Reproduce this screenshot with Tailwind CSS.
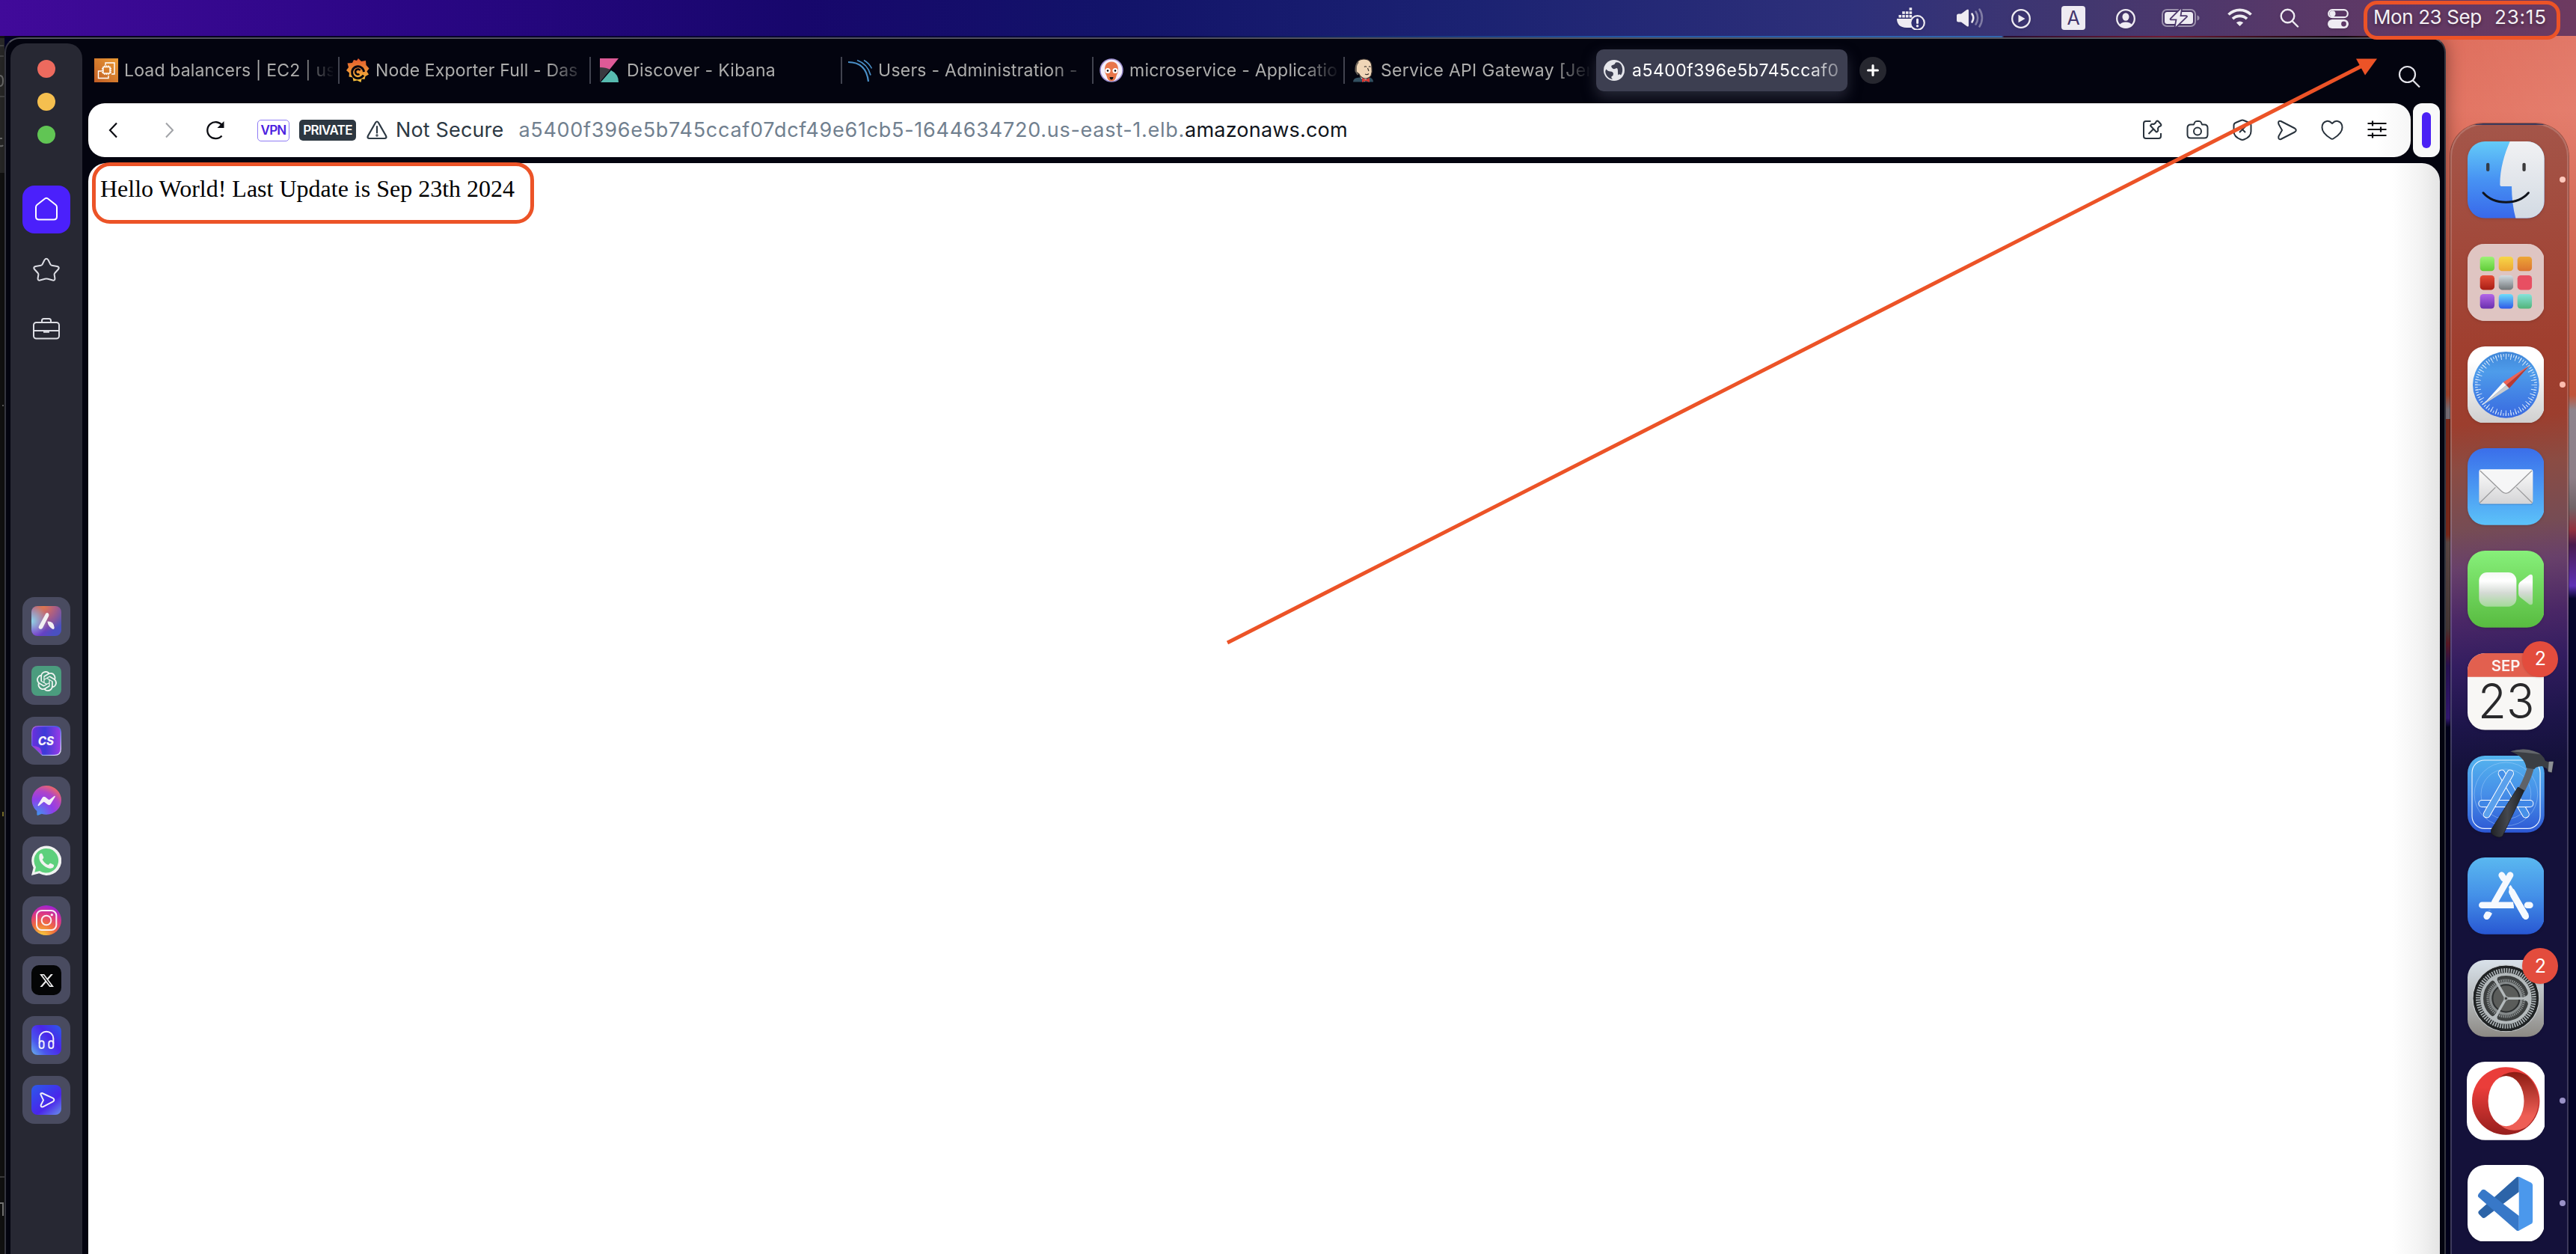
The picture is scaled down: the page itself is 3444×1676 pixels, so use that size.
<!DOCTYPE html>
<html lang="en">
<head>
<meta charset="utf-8">
<title>Desktop</title>
<script src="https://cdn.jsdelivr.net/npm/@tailwindcss/browser@4"></script>
</head>
<body class="relative flex h-[1676px] w-[3444px] flex-col overflow-hidden bg-[#020228] font-['Inter',sans-serif]">

<!-- menu bar -->
<header class="relative z-20 flex h-12 shrink-0 items-center bg-[linear-gradient(90deg,#410a9a_0%,#2a0684_16%,#17076c_31%,#121369_43%,#1b2272_57%,#2e307a_72%,#42376f_81%,#583868_89%,#6d3a60_100%)] pl-[2536px] text-[#eeebf2]">
  <svg class="h-8 w-[38px] shrink-0 drop-shadow" viewBox="0 0 38 32" fill="currentColor"><path d="M0 17h21a10 10 0 0 0-1 12H13C4 29 0 24 0 17z"/><path d="M2.500 12h3.600v3.600H2.500zM7.200 12h3.600v3.600H7.200zM11.900 12h3.600v3.600h-3.600zM16.600 12h3.600v3.600h-3.600zM7.200 7.200h3.600v3.600H7.200zM11.900 7.200h3.600v3.600h-3.600zM16.600 7.200h3.600v3.600h-3.600zM16.600 2.200h3.600v3.600h-3.600z"/><circle cx="27.500" cy="22.500" r="9.300" fill="none" stroke="currentColor" stroke-width="2.200"/><rect x="26" y="16.500" width="3" height="7.500" rx="1.500"/><circle cx="27.500" cy="26.800" r="1.700"/></svg>
  <svg class="ml-[42px] h-8 w-[36px] shrink-0 drop-shadow" viewBox="0 0 36 32"><path d="M0 13q0-2.500 2.500-2.500H6L13.500 5q2.500-1.500 2.500 1v20q0 2.500-2.500 1L6 21.500H2.500Q0 21.500 0 19z" fill="currentColor"/><g fill="none" stroke="currentColor" stroke-width="2.600" stroke-linecap="round"><path d="M20.500 10.500a10 10 0 0 1 0 11"/><path d="M25.500 7.500a15 15 0 0 1 0 17" opacity=".4"/><path d="M30.500 4.500a21 21 0 0 1 0 23" opacity=".4"/></g></svg>
  <svg class="ml-[37px] mt-[2px] size-[26px] shrink-0 drop-shadow" viewBox="0 0 26 26"><circle cx="13" cy="13" r="11.800" fill="none" stroke="currentColor" stroke-width="2.300"/><path d="M9.500 7.700v10.600l9-5.300z" fill="currentColor"/></svg>
  <div class="ml-[41px] flex size-8 shrink-0 items-center justify-center rounded-[4px] bg-[#eeebf2] text-[25px] leading-none text-[#43356c]">A</div>
  <svg class="ml-[41px] mt-[2px] size-[26px] shrink-0 drop-shadow" viewBox="0 0 26 26"><circle cx="13" cy="13" r="11.800" fill="none" stroke="currentColor" stroke-width="2.300"/><ellipse cx="13" cy="10.500" rx="4.500" ry="5.200" fill="currentColor"/><path d="M4.500 21.500Q7 17.500 13 17.500t8.500 4Q18 25 13 25t-8.500-3.500z" fill="currentColor"/></svg>
  <svg class="ml-[35px] h-[26px] w-[51px] shrink-0 drop-shadow" viewBox="0 0 51 26"><rect x="1" y="2" width="44" height="22" rx="6" fill="none" stroke="currentColor" stroke-width="2" opacity=".5"/><path d="M47.500 9.500q3 1 3 3.500t-3 3.500z" fill="currentColor" opacity=".5"/><rect x="4" y="5" width="38" height="16" rx="3.500" fill="currentColor"/><path d="M26 1L12.500 14.500h8L18.500 25 33 11h-8.500z" fill="currentColor" stroke="#4d386c" stroke-width="3.600" stroke-linejoin="round" paint-order="stroke"/></svg>
  <svg class="ml-[37px] h-[26px] w-[33px] shrink-0 drop-shadow" viewBox="0 0 33 26" fill="none" stroke="currentColor" stroke-width="3.800"><path d="M1.500 8.500a21.500 21.500 0 0 1 30 0"/><path d="M7 14.200a13.700 13.700 0 0 1 19 0"/><path d="M11.800 19.300Q16.500 15.500 21.200 19.300L16.500 24z" fill="currentColor" stroke="none"/></svg>
  <svg class="ml-[37px] size-[26px] shrink-0 drop-shadow" viewBox="0 0 26 26" fill="none" stroke="currentColor" stroke-width="2.400" stroke-linecap="round"><circle cx="10.500" cy="10.500" r="8.800"/><path d="M17 17.500l7 7"/></svg>
  <svg class="ml-[38px] mt-[2px] h-[26px] w-7 shrink-0 drop-shadow" viewBox="0 0 28 26"><rect x="1.200" y="1.200" width="25.600" height="10" rx="5" fill="none" stroke="currentColor" stroke-width="2.200"/><circle cx="6.500" cy="6.200" r="4" fill="currentColor"/><rect y="14" width="28" height="12" rx="6" fill="currentColor"/><circle cx="21.500" cy="20" r="3.400" fill="#5e3968"/></svg>
  <div class="relative ml-[20px] flex h-12 w-[263px] shrink-0 items-start pl-[13px] pt-[8px] text-[26px] leading-[30px] text-[#f4f0f4]">
    <span class="w-[162px] shrink-0 whitespace-nowrap tracking-[-0.4px] [text-shadow:0_2px_4px_#0006]">Mon 23 Sep</span><span class="tracking-[0.8px] [text-shadow:0_2px_4px_#0006]">23:15</span>
    <div class="absolute left-0 top-[1px] h-[52px] w-[263px] rounded-[18px] border-[5px] border-[#ec5327]"></div>
  </div>
</header>

<!-- wallpaper around the window -->
<div class="absolute right-0 top-12 h-[1628px] w-[200px] bg-[linear-gradient(75deg,#0000_60%,#ffffff18_100%),linear-gradient(180deg,#de6a58_0%,#e27260_100px,#d46450_220px,#c4533b_400px,#bd4c30_480px,#8a7f88_500px,#8a7a84_590px,#6d5f63_630px,#8f2c3b_660px,#45154a_680px,#5b2cb4_735px,#020228_752px)]"></div>
<div class="absolute left-[3270px] top-[560px] h-[1116px] w-[8px] bg-[linear-gradient(180deg,#8f2f1f_0px,#8f2f1f_155px,#6d5350_165px,#50403f_280px,#6a1d2b_300px,#2e1460_330px,#3a1b85_400px,#020220_412px)]"></div>
<div class="absolute left-0 top-12 h-[2px] w-full bg-[linear-gradient(90deg,#08031f_0%,#0a0a50_45%,#2d6fd0_64%,#3f80d8_77.700%,#32103a_77.800%,#8a2040_84%,#100510_91%,#a03030_94%,#0000_95%)]"></div>

<main class="relative flex h-[1628px]">
  <!-- edge of a window behind -->
  <svg class="h-[1628px] w-[6px] shrink-0" viewBox="0 0 6 1628"><rect width="6" height="1628" fill="#131313"/><rect width="6" height="180" y="3" fill="#2b2b2b"/><path d="M0 13h5M0 27h5M0 81h6" stroke="#555" stroke-width="1.500"/><path d="M0 53q4 0 4 7t-4 7M0 137h3M0 147q3 1 4-1" stroke="#777" stroke-width="2" fill="none"/><path d="M3 494h2" stroke="#888" stroke-width="1.500"/><path d="M4 1037v6" stroke="#8c8032" stroke-width="2"/><path d="M0 1525h6" stroke="#444" stroke-width="2"/><path d="M0 1560h4v17" stroke="#888" stroke-width="2" fill="none"/></svg>

  <!-- browser window -->
  <div class="mt-[2px] flex w-[3264px] shrink-0 rounded-t-[20px] border-2 border-b-0 border-[#50515c] border-x-[#34353f] bg-[#03040f] pl-[6px] shadow-[0_0_24px_#0006]">
    <aside class="mt-[6px] flex w-24 shrink-0 flex-col items-center rounded-t-[20px] bg-[#272833] pt-[22px]">
      <div class="flex flex-col gap-5">
        <i class="size-6 rounded-full bg-[#ed6a5e]"></i><i class="size-6 rounded-full bg-[#f5bf4f]"></i><i class="size-6 rounded-full bg-[#61c554]"></i>
      </div>
      <div class="mt-[56px] flex flex-col gap-4 text-[#dcdde4]">
        <div class="flex size-16 items-center justify-center rounded-2xl bg-[#4b20fb] text-white"><svg class="size-10" viewBox="0 0 40 40" fill="none" stroke="currentColor" stroke-width="2" stroke-linejoin="round"><path d="M6 17q0-2 1.500-3.200L18 5.500q2-1.500 4 0l10.500 8.300Q34 15 34 17v12.500q0 4-4 4H10q-4 0-4-4z"/></svg></div>
        <div class="flex size-16 items-center justify-center"><svg class="size-10" viewBox="0 0 40 40" fill="none" stroke="currentColor" stroke-width="2" stroke-linejoin="round"><path d="M17.500 7.500q2.500-3.500 5 0l3 6q.6 1 1.800 1.200l7 1.300q4 1 1.500 4l-4.500 5q-.8 1-.7 2l.8 5q.2 3.200-3 2.500l-6.500-1.800q-1.900-.5-3.800 0l-6.500 1.800q-3.200.7-3-2.500l.8-5q.1-1-.7-2l-4.500-5q-2.500-3 1.500-4l7-1.300q1.200-.2 1.800-1.200z"/></svg></div>
        <div class="flex size-16 items-center justify-center"><svg class="size-10" viewBox="0 0 40 40" fill="none" stroke="currentColor" stroke-width="2"><rect x="3" y="11" width="34" height="21.500" rx="3.500"/><path d="M14 11V8.500Q14 6 16.500 6h7Q26 6 26 8.500V11M3 22h34"/><path d="M16 23.500h8" stroke-width="2.500"/></svg></div>
      </div>

      <div class="mt-[326px] flex flex-col gap-4">
        <div class="flex size-16 items-center justify-center rounded-[16px] bg-[#494b60]"><div class="flex size-10 items-center justify-center rounded-lg bg-[radial-gradient(circle_at_0%_50%,#8fd5e8_0%,#8fd5e800_50%),radial-gradient(circle_at_40%_0%,#e07a4c_0%,#e07a4c00_75%),linear-gradient(120deg,#7a35c8_40%,#4a50c0_80%)]"><svg class="size-10" viewBox="0 0 120 120" fill="#f2f0f2"><path d="M58 29q8-6 12 4 1 4-1 8L45 88q-6 8-14 2-4-5-1-9z"/><path d="M64 62q25-2 28 24 0 10-10 5Q67 80 64 62z"/></svg></div></div>
        <div class="flex size-16 items-center justify-center rounded-[16px] bg-[#494b60]"><div class="flex size-10 items-center justify-center rounded-lg bg-[#4b9c7e]"><svg class="size-[27px]" viewBox="0 0 24 24" fill="#f1f4f2"><path d="M22.2819 9.8211a5.9847 5.9847 0 0 0-.5157-4.9108 6.0462 6.0462 0 0 0-6.5098-2.9A6.0651 6.0651 0 0 0 4.9807 4.1818a5.9847 5.9847 0 0 0-3.9977 2.9 6.0462 6.0462 0 0 0 .7427 7.0966 5.98 5.98 0 0 0 .511 4.9107 6.051 6.051 0 0 0 6.5146 2.9001A5.9847 5.9847 0 0 0 13.2599 24a6.0557 6.0557 0 0 0 5.7718-4.2058 5.9894 5.9894 0 0 0 3.9977-2.9001 6.0557 6.0557 0 0 0-.7475-7.0729zm-9.022 12.6081a4.4755 4.4755 0 0 1-2.8764-1.0408l.1419-.0804 4.7783-2.7582a.7948.7948 0 0 0 .3927-.6813v-6.7369l2.02 1.1686a.071.071 0 0 1 .038.052v5.5826a4.504 4.504 0 0 1-4.4945 4.4944zm-9.6607-4.1254a4.4708 4.4708 0 0 1-.5346-3.0137l.142.0852 4.783 2.7582a.7712.7712 0 0 0 .7806 0l5.8428-3.3685v2.3324a.0804.0804 0 0 1-.0332.0615L9.74 19.9502a4.4992 4.4992 0 0 1-6.1408-1.6464zM2.3408 7.8956a4.485 4.485 0 0 1 2.3655-1.9728V11.6a.7664.7664 0 0 0 .3879.6765l5.8144 3.3543-2.0201 1.1685a.0757.0757 0 0 1-.071 0l-4.8303-2.7865A4.504 4.504 0 0 1 2.3408 7.872zm16.5963 3.8558L13.1038 8.364 15.1192 7.2a.0757.0757 0 0 1 .071 0l4.8303 2.7913a4.4944 4.4944 0 0 1-.6765 8.1042v-5.6772a.79.79 0 0 0-.407-.667zm2.0107-3.0231l-.142-.0852-4.7735-2.7818a.7759.7759 0 0 0-.7854 0L9.409 9.2297V6.8974a.0662.0662 0 0 1 .0284-.0615l4.8303-2.7866a4.4992 4.4992 0 0 1 6.6802 4.66zM8.3065 12.863l-2.02-1.1638a.0804.0804 0 0 1-.038-.0567V6.0742a4.4992 4.4992 0 0 1 7.3757-3.4537l-.142.0805L8.704 5.459a.7948.7948 0 0 0-.3927.6813zm1.0976-2.3654l2.602-1.4998 2.6069 1.4998v2.9994l-2.5974 1.4997-2.6067-1.4997Z"/></svg></div></div>
        <div class="flex size-16 items-center justify-center rounded-[16px] bg-[#494b60]"><svg class="size-10" viewBox="0 0 120 120"><defs><linearGradient id="cs" x1="0" x2="1"><stop offset="0" stop-color="#6a30dc"/><stop offset=".45" stop-color="#3c3ad8"/><stop offset="1" stop-color="#9a3be6"/></linearGradient><linearGradient id="csb" x2="1" y2="1"><stop offset="0" stop-color="#b45fd8"/><stop offset=".45" stop-color="#3c62ea"/><stop offset="1" stop-color="#f0e6fa"/></linearGradient></defs><path d="M2 28Q2 2 28 2h64q26 0 26 26v64q0 26-26 26H44L2 78z" fill="url(#cs)" stroke="url(#csb)" stroke-width="4"/><path d="M2 80q24 2 30 8 8 6 11 29z" fill="#9a40dc"/><text x="58" y="77" text-anchor="middle" font-family="Inter" font-weight="800" font-style="italic" font-size="46" textLength="64" lengthAdjust="spacingAndGlyphs" fill="#f5f3fa">CS</text></svg></div>
        <div class="flex size-16 items-center justify-center rounded-[16px] bg-[#494b60]"><svg class="size-10" viewBox="0 0 120 120"><defs><radialGradient id="ms" cx=".2" cy="1" r="1.100"><stop offset="0" stop-color="#3f96ee"/><stop offset=".5" stop-color="#8f3eea"/><stop offset=".75" stop-color="#b044c8"/><stop offset="1" stop-color="#f06a62"/></radialGradient></defs><path d="M60 0a60 58 0 0 1 0 116q-10 0-19-3l-15 6q-4 1-4-4V102A58 58 0 0 1 60 0z" fill="url(#ms)"/><path d="M26 77l18-29q5-7 12-2l13 10q2 1 4 0l18-14q6-2 4 3L77 74q-5 7-12 2L52 66q-2-1-4 0L30 81q-5 2-4-4z" fill="#f4eff6"/></svg></div>
        <div class="flex size-16 items-center justify-center rounded-[16px] bg-[#494b60]"><svg class="size-10" viewBox="0 0 120 120"><path d="M0 120l8-31A60 59 0 1 1 31 112z" fill="#f1f3f1"/><path d="M13 107l5-20A49 49 0 1 1 33 102z" fill="#5dd07c"/><path d="M34 34q5-5 9-1l6 14q1 3-5 9 8 16 24 22 6-8 9-7l13 7q1 10-8 13-12 5-32-10Q29 65 31 44q0-6 3-10z" fill="#f1f3f1"/></svg></div>
        <div class="flex size-16 items-center justify-center rounded-[16px] bg-[#494b60]"><div class="size-10 rounded-full bg-[radial-gradient(circle_at_35%_105%,#f6c83e_5%,#f0703c_35%,#df3a80_62%,#a423d0_85%,#6a1cf0_110%)]"><svg class="size-10" viewBox="0 0 120 120" fill="none" stroke="#f8eef4" stroke-width="6"><rect x="21" y="21" width="79" height="78" rx="20"/><circle cx="60" cy="60" r="19"/><circle cx="82" cy="38" r="5" fill="#f8eef4" stroke="none"/></svg></div></div>
        <div class="flex size-16 items-center justify-center rounded-[16px] bg-[#494b60]"><div class="flex size-10 items-center justify-center rounded-[10px] bg-[#040506]"><svg class="size-[21px]" viewBox="0 0 24 24" fill="#eee"><path d="M18.244 2.250h3.308l-7.227 8.260 8.502 11.240H16.170l-5.214-6.817L4.990 21.750H1.680l7.730-8.835L1.254 2.250H8.080l4.713 6.231zm-1.161 17.520h1.833L7.084 4.126H5.117z"/></svg></div></div>
        <div class="flex size-16 items-center justify-center rounded-[16px] bg-[#494b60]"><div class="size-10 rounded-lg bg-[linear-gradient(50deg,#6ab4ea_0%,#4a55ec_28%,#4a25ea_60%,#2c5bea_100%)]"><svg class="size-10" viewBox="0 0 120 120" fill="none" stroke="#f1effa" stroke-width="6"><path d="M32 74V54a28 28 0 0 1 56 0v20"/><rect x="32" y="64" width="18" height="29" rx="9"/><rect x="70" y="64" width="18" height="29" rx="9"/></svg></div></div>
        <div class="flex size-16 items-center justify-center rounded-[16px] bg-[#494b60]"><div class="size-10 rounded-lg bg-[linear-gradient(140deg,#2c5bea_0%,#3b3cec_35%,#4a25ea_62%,#6a92ea_100%)]"><svg class="size-10" viewBox="0 0 120 120" fill="none" stroke="#f1effa" stroke-width="6" stroke-linejoin="round"><path d="M38 40q-4-7 5-7l43 20q10 7 0 14L46 88q-9 2-8-7l10-20z"/></svg></div></div>
      </div>
    </aside>

    <div class="ml-2 mr-[6px] flex w-[3144px] shrink-0 flex-col">
      <!-- tabs -->
      <div class="flex h-[86px] shrink-0 pt-[14px] text-[23px] text-[#adadac]">
        <div class="flex h-14 w-[336px] items-center"><div class="flex h-9 w-full items-center border-r-2 border-[#41434f] pl-2"><svg class="size-8 shrink-0" viewBox="0 0 32 32"><defs><linearGradient id="ec" x1="0" y1="1" x2="1" y2="0"><stop offset="0" stop-color="#c05d26"/><stop offset="1" stop-color="#eb9b34"/></linearGradient></defs><rect width="32" height="32" fill="url(#ec)"/><g fill="none" stroke="#fff" stroke-width="1.400"><path d="M15 9.500V6h12v15h-4M10 17H5.500v9.500H19V23"/><rect x="12" y="11.500" width="9" height="8.500"/><path d="M14 9.500v2M16.500 9.500v2M19 9.500v2M14 20v2M16.500 20v2M19 20v2M10 13.500h2M10 16h2M10 18.500h2M21 13.500h2M21 16h2M21 18.500h2"/></g></svg><span class="ml-[8px] w-[279px] overflow-hidden whitespace-nowrap tracking-[0.15px] [mask-image:linear-gradient(90deg,#000_83%,#0000_101%)]">Load balancers | EC2 | us</span></div></div>
        <div class="flex h-14 w-[336px] items-center"><div class="flex h-9 w-full items-center border-r-2 border-[#41434f] pl-2"><svg class="size-8 shrink-0" viewBox="0 0 32 32"><defs><linearGradient id="gf" x2="0" y2="1"><stop offset="0" stop-color="#e4562c"/><stop offset="1" stop-color="#f4c33c"/></linearGradient></defs><path d="M17 0l4 4 6-1 .5 6 4 4.500-3 4 2.500 4-4.500 2.500-1 4-4-.5-1 4.500-5-2.500-5 1-1-5-5-1 .5-5L1 16l3-4-1.500-5.500L9 6l2-4 4 1z" fill="url(#gf)"/><path d="M24.500 18a8 8 0 1 0-5 8.200 10 10 0 0 0 4.500-3.500" fill="none" stroke="#03040f" stroke-width="3"/><path d="M18.500 21a3.500 3.500 0 1 1 1-5" fill="none" stroke="#03040f" stroke-width="2.600"/></svg><span class="ml-[8px] w-[279px] overflow-hidden whitespace-nowrap tracking-[0.15px] [mask-image:linear-gradient(90deg,#000_83%,#0000_101%)]">Node Exporter Full - Das</span></div></div>
        <div class="flex h-14 w-[336px] items-center"><div class="flex h-9 w-full items-center border-r-2 border-[#41434f] pl-2"><svg class="size-8 shrink-0" viewBox="0 0 32 32"><path d="M4 0h25L4 31z" fill="#dd5a97"/><path d="M4 12q8 0 14 3L4 31z" fill="#3a3a40"/><path d="M19 16q10 5 10 16H5z" fill="#57bbb0"/></svg><span class="ml-[8px] w-[279px] overflow-hidden whitespace-nowrap tracking-[0.3px] [mask-image:linear-gradient(90deg,#000_83%,#0000_101%)]">Discover - Kibana</span></div></div>
        <div class="flex h-14 w-[336px] items-center"><div class="flex h-9 w-full items-center border-r-2 border-[#41434f] pl-2"><svg class="size-8 shrink-0" viewBox="0 0 32 32" fill="none" stroke="#4a90c8"><path d="M0 5q24 0 27 26" stroke-width="2.200"/><path d="M12 2.500q14 5 18 20" stroke-width="1.800"/><path d="M21 2.500q7 4 10.500 11" stroke-width="1.500"/></svg><span class="ml-[8px] w-[279px] overflow-hidden whitespace-nowrap tracking-[0.26px] [mask-image:linear-gradient(90deg,#000_83%,#0000_101%)]">Users - Administration -</span></div></div>
        <div class="flex h-14 w-[336px] items-center"><div class="flex h-9 w-full items-center border-r-2 border-[#41434f] pl-2"><svg class="size-8 shrink-0" viewBox="0 0 32 32"><circle cx="16" cy="16" r="15" fill="#f4f0fb" stroke="#9d8fd0" stroke-width="1.500"/><path d="M16 4.500c7 0 9 5 9 11 0 4-1.500 5-2.500 8q-1.500 7-6.500 7t-6.500-7c-1-3-2.500-4-2.500-8 0-6 2-11 9-11z" fill="#e8764a"/><circle cx="11" cy="16.500" r="3.600" fill="#fff"/><circle cx="21" cy="16.500" r="3.600" fill="#fff"/><circle cx="11" cy="16.500" r="1.300"/><circle cx="21" cy="16.500" r="1.300"/><path d="M13.500 25h5q-.5 3.500-2.500 3.500T13.500 25z" fill="#111"/></svg><span class="ml-[8px] w-[279px] overflow-hidden whitespace-nowrap tracking-[0.24px] [mask-image:linear-gradient(90deg,#000_83%,#0000_101%)]">microservice - Application</span></div></div>
        <div class="flex h-14 w-[336px] items-center pl-2"><svg class="size-8 shrink-0" viewBox="0 0 32 32"><path d="M3 31.500q0-6 9-6l14 0q4 2 4 6z" fill="#335061"/><path d="M12 24l6 7.500 6-7.500z" fill="#f4f4f4"/><path d="M7 12Q7 1 17.500 1T28 12q1 6-1 11-3 4-8 4-6-1-8-6l-4-3z" fill="#f0d6b7" stroke="#38302c" stroke-width="1.200"/><path d="M10 5q-4 4-3.500 12l3 5" fill="none" stroke="#6b6258" stroke-width="2"/><path d="M18 11.500q1.500-1.500 3 0M24 11.500q1-1.500 2.500 0M22.500 13l1.500 4M19 21q3 1.500 5-.5" stroke="#38302c" fill="none" stroke-width="1.100"/><path d="M15 26l5 2.500 5-2.500v6l-5-2-5 2z" fill="#d33833"/></svg><span class="ml-[8px] w-[279px] overflow-hidden whitespace-nowrap tracking-[0.28px] [mask-image:linear-gradient(90deg,#000_83%,#0000_101%)]">Service API Gateway [Jenk</span></div>
        <div class="flex h-14 w-[336px] items-center rounded-[10px] bg-[#3d3f51] pl-[10px] text-white shadow-[0_8px_18px_#3d3f5199]"><svg class="size-7 shrink-0" viewBox="0 0 28 28"><circle cx="14" cy="14" r="14" fill="#e6e7ec"/><path d="M3.500 12.500q2 3 5.500 3t4 3q0 3-2 3.500t1 4q-6-1-8.500-6t0-7.500zM16 3.500q-1 3-4 3.500t-1 3.500 5 1 3 4 1 4.500 3 .5q3.500-5 1.500-11.500t-8.500-5.500z" fill="#3d3f51"/></svg><span class="ml-[10px] w-[278px] overflow-hidden whitespace-nowrap tracking-[0.5px] [mask-image:linear-gradient(90deg,#000_83%,#0006_99%)]">a5400f396e5b745ccaf0</span></div>
        <div class="ml-4 mt-[10px] flex size-9 items-center justify-center rounded-full bg-[#26272f]"><svg class="size-4" viewBox="0 0 16 16" stroke="#fff" stroke-width="3.200" stroke-linecap="round"><path d="M8 1.600v12.800M1.600 8h12.800"/></svg></div>
        <svg class="ml-auto mr-[26px] mt-[21px] size-[30px]" viewBox="0 0 30 30" fill="none" stroke="#e4e4ea" stroke-width="2.200"><circle cx="12.500" cy="12.500" r="10.500"/><path d="M20 20.500l9 9"/></svg>
      </div>

      <!-- toolbar -->
      <div class="flex h-[72px] shrink-0 gap-[3px]">
        <div class="flex w-[3105px] items-center rounded-[22px] bg-white bg-[linear-gradient(90deg,#fff_98.500%,#f6f6f6_100%)] text-[27px] text-[#2d3944]">
          <svg class="ml-[25px] size-6" viewBox="0 0 24 24" fill="none" stroke="#0b0c12" stroke-width="2.200"><path d="M13 2.500L4 12l9 9.500"/></svg>
          <svg class="ml-[41px] size-6" viewBox="0 0 24 24" fill="none" stroke="#a2a4a8" stroke-width="2"><path d="M14 2.500L23 12l-9 9.500"/></svg>
          <svg class="ml-[40px] size-8" viewBox="0 0 32 32" fill="none" stroke="#0b0c12" stroke-width="2.300"><path d="M24.500 23.500A11 11 0 1 1 25 9.500"/><path d="M27.500 4v9h-9z" fill="#0b0c12" stroke="none"/></svg>
          <div class="ml-[40px] flex h-[29px] w-[43px] items-center justify-center rounded-[5px] border-[1.500px] border-[#8f7cf5] text-[17px] font-semibold leading-none tracking-[-0.800px] text-[#4b20e0]">VPN</div>
          <div class="ml-[13px] flex h-[28px] w-[76px] items-center justify-center rounded-[5px] bg-[#2d3741] text-[17px] font-semibold leading-none tracking-[-0.650px] text-white">PRIVATE</div>
          <svg class="ml-[14px] size-7" viewBox="0 0 28 28" fill="none" stroke="#2d3944" stroke-width="2.200" stroke-linejoin="round"><path d="M12 4q2-3 4 0l10 17.500q1.500 3.500-2 3.500H4q-3.500 0-2-3.500z"/><path d="M14 9v8.500" stroke-linecap="round"/><circle cx="14" cy="21" r=".6"/></svg>
          <span class="ml-[11px] whitespace-nowrap tracking-[0.150px]">Not Secure</span>
          <span class="ml-[20px] whitespace-nowrap tracking-[0.730px] text-[#71808f]">a5400f396e5b745ccaf07dcf49e61cb5-1644634720.us-east-1.elb.</span><span class="whitespace-nowrap tracking-[0.200px] text-[#10151c]">amazonaws.com</span>
          <div class="ml-auto mr-[29px] flex gap-[28px] text-[#28323c]">
            <svg class="size-8" viewBox="0 0 32 32" fill="none" stroke="currentColor" stroke-width="2" stroke-linejoin="round"><path d="M13.500 4H7Q4 4 4 7v17q0 3 3 3h17q3 0 3-3v-4"/><path d="M17.500 8q3-1.500 3.500-4 1.500-1 3 .5l3 3.500q1 1.500-.5 2.500-3 .5-3.500 3.500 1 4-2 4.500l-8-8.500q1-3 4.500-2zM17 14.500L10.500 21"/></svg>
            <svg class="size-8" viewBox="0 0 32 32" fill="none" stroke="currentColor" stroke-width="2" stroke-linejoin="round"><path d="M11 8.500l1-2.500q.8-2 3-2h3q2.200 0 3 2l1 2.500h3q4.500 0 4.500 4.500v9q0 4.500-4.500 4.500H7Q2.500 26.500 2.500 22v-9Q2.500 8.500 7 8.500z"/><circle cx="16" cy="17.500" r="5"/></svg>
            <svg class="size-8" viewBox="0 0 32 32" fill="none" stroke="currentColor" stroke-width="2" stroke-linejoin="round"><path d="M14 3q2-1 4 0l7 3q2.500 1 2.500 3.500v8q0 7.500-9.500 11-2 .8-4 0Q4.500 25 4.500 17.500v-8Q4.500 7 7 6z"/><path d="M12 11l8 8M20 11l-8 8"/></svg>
            <svg class="size-8" viewBox="0 0 32 32" fill="none" stroke="currentColor" stroke-width="2" stroke-linejoin="round"><path d="M4.500 8q-1.500-5 3-4L26 13.500q3.500 2.500 0 5L7.500 28q-4 1-3-4L9 16z"/></svg>
            <svg class="size-8" viewBox="0 0 32 32" fill="none" stroke="currentColor" stroke-width="2" stroke-linejoin="round"><path d="M16 7Q12 3 8.500 4 2.500 5.500 2.500 12.500 2.500 20 14 27q2 1.500 4 0 11.500-7 11.500-14.500 0-7-6-8.500Q20 3 16 7z"/></svg>
            <svg class="size-8" viewBox="0 0 32 32" fill="none" stroke="#0b0c12" stroke-width="2.200"><path d="M3.500 7h25M3.500 15h25M3.500 23h25M10 3.500v7M21 11.500v7M10 19.500v7"/></svg>
          </div>
        </div>
        <div class="flex w-9 items-center justify-center rounded-[12px] bg-[#f8f8f8]"><i class="h-12 w-3 rounded-full bg-[#4b20f5]"></i></div>
      </div>

      <!-- page -->
      <div class="mt-2 grow rounded-t-[24px] bg-[linear-gradient(90deg,#fff_3080px,#f4f4f4_3115px,#e4e4e4_3144px)] px-4 pt-[16px] font-['Liberation_Serif','Times_New_Roman',serif] text-[32px] leading-[37px] text-black">
        <p class="relative w-max">Hello World! Last Update is Sep 23th 2024
          <span class="absolute -left-[11px] -top-[17px] h-[82px] w-[591px] rounded-[24px] border-[5px] border-[#ec5327]"></span>
        </p>
      </div>
    </div>
  </div>

  <!-- dock -->
  <div class="ml-[6px] mt-[117px] flex h-[1511px] w-[158px] shrink-0 flex-col items-center gap-[34px] rounded-t-[44px] border-2 border-b-0 border-[#ffffff2c] bg-[linear-gradient(173deg,#a4564a_0px,#a24a3c_150px,#a03f2f_300px,#9c3e2e_400px,#8b4c43_460px,#764c54_540px,#68406a_590px,#4a2766_660px,#331d60_720px,#1d154a_800px,#14113a_860px)] pr-[10px] pt-[22px] shadow-[0_0_0_1px_#0005]">
    <div class="relative"><svg class="size-[102.750px] overflow-visible drop-shadow" viewBox="0 0 308 308"><defs><linearGradient id="f1" x2="0" y2="1"><stop stop-color="#64cbf8"/><stop offset=".5" stop-color="#4792f3"/><stop offset="1" stop-color="#3868ea"/></linearGradient><linearGradient id="f2" x2="0" y2="1"><stop stop-color="#f1f1f3"/><stop offset="1" stop-color="#d2dae3"/></linearGradient><clipPath id="sq"><rect width="308" height="308" rx="70"/></clipPath></defs><g clip-path="url(#sq)"><path fill="url(#f1)" d="M0 0h308v308H0z"/><path d="M170 0C148 50 130 110 130 172q0 8 8 8h39q0 70 16 128H308V0z" fill="url(#f2)"/></g><rect x="75" y="86" width="13" height="34" rx="6" fill="#333c48"/><rect x="220" y="86" width="13" height="34" rx="6" fill="#3a3a3c"/><path d="M63 206C108 256 200 256 244 206" fill="none" stroke="#10141c" stroke-width="9" stroke-linecap="round"/></svg><i class="absolute -right-[29px] top-[47px] size-2 rounded-full bg-[#ffc9bd]"></i></div>
    <div class="relative"><svg class="size-[102.750px] drop-shadow" viewBox="0 0 308 308"><rect width="308" height="308" rx="70" fill="#dfc5c2" stroke="#ead8d6" stroke-width="2"/><defs><linearGradient id="l1" x2="0" y2="1"><stop stop-color="#9cf276"/><stop offset="1" stop-color="#60cc38"/></linearGradient><linearGradient id="l2" x2="0" y2="1"><stop stop-color="#f7d747"/><stop offset="1" stop-color="#eda634"/></linearGradient><linearGradient id="l3" x2="0" y2="1"><stop stop-color="#eda636"/><stop offset="1" stop-color="#dc7430"/></linearGradient><linearGradient id="l4" x2="0" y2="1"><stop stop-color="#e64c38"/><stop offset="1" stop-color="#a81e14"/></linearGradient><linearGradient id="l5" x2="0" y2="1"><stop stop-color="#d3dde3"/><stop offset="1" stop-color="#73777a"/></linearGradient><linearGradient id="l7" x2="0" y2="1"><stop stop-color="#b366e8"/><stop offset="1" stop-color="#6a2fae"/></linearGradient><linearGradient id="l8" x2="0" y2="1"><stop stop-color="#6ddcfb"/><stop offset="1" stop-color="#2e5ae8"/></linearGradient><linearGradient id="l9" x2="0" y2="1"><stop stop-color="#86e3da"/><stop offset="1" stop-color="#52b47a"/></linearGradient></defs><g><rect x="50" y="51" width="58" height="58" rx="13" fill="url(#l1)"/><rect x="125" y="51" width="58" height="58" rx="13" fill="url(#l2)"/><rect x="200" y="51" width="58" height="58" rx="13" fill="url(#l3)"/><rect x="50" y="126" width="58" height="58" rx="13" fill="url(#l4)"/><rect x="125" y="126" width="58" height="58" rx="13" fill="url(#l5)"/><rect x="200" y="126" width="58" height="58" rx="13" fill="#e84f62"/><rect x="50" y="201" width="58" height="58" rx="13" fill="url(#l7)"/><rect x="125" y="201" width="58" height="58" rx="13" fill="url(#l8)"/><rect x="200" y="201" width="58" height="58" rx="13" fill="url(#l9)"/></g></svg></div>
    <div class="relative"><svg class="size-[102.750px] drop-shadow" viewBox="0 0 308 308"><defs><linearGradient id="s1" x2="0" y2="1"><stop offset=".2" stop-color="#fff"/><stop offset="1" stop-color="#cfcfcf"/></linearGradient><linearGradient id="s2" x2="0" y2="1"><stop stop-color="#3f86d8"/><stop offset=".3" stop-color="#4e9cea"/><stop offset="1" stop-color="#3869e0"/></linearGradient></defs><rect width="308" height="308" rx="70" fill="url(#s1)"/><circle cx="154" cy="154" r="133" fill="url(#s2)"/><circle cx="154" cy="154" r="119" fill="none" stroke="#d5e6fa" stroke-width="11" pathLength="144" stroke-dasharray=".6 1.400" stroke-dashoffset=".3"/><circle cx="154" cy="154" r="113" fill="none" stroke="#d5e6fa" stroke-width="22" pathLength="144" stroke-dasharray=".6 3.400" stroke-dashoffset=".3"/><path d="M249 76L143 143l12 12z" fill="#ef6253"/><path d="M249 76L167 168l-12-13z" fill="#b93a30"/><path d="M60 235L143 143l12 12z" fill="#fafafa"/><path d="M60 235L167 168l-12-13z" fill="#c9ccd0"/></svg><i class="absolute -right-[29px] top-[47px] size-2 rounded-full bg-[#ffbcae]"></i></div>
    <div class="relative"><svg class="size-[102.750px] drop-shadow" viewBox="0 0 308 308"><defs><linearGradient id="m1" x2="0" y2="1"><stop stop-color="#3a6eea"/><stop offset=".5" stop-color="#4a97f2"/><stop offset="1" stop-color="#5cc2f9"/></linearGradient><linearGradient id="m2" x2="0" y2="1"><stop stop-color="#fbfbfb"/><stop offset="1" stop-color="#d4d4d6"/></linearGradient></defs><rect width="308" height="308" rx="70" fill="url(#m1)"/><rect x="46" y="90" width="216" height="138" rx="10" fill="#0b3a8033"/><rect x="46" y="85" width="216" height="138" rx="10" fill="url(#m2)"/><g fill="none" stroke="#9b9b9d" stroke-width="4"><path d="M112 157l-63 62M196 157l63 62"/><path d="M50 90l87 83q17 16 34 0l87-83" fill="#f6f6f7"/></g></svg></div>
    <div class="relative"><svg class="size-[102.750px] drop-shadow" viewBox="0 0 308 308"><defs><linearGradient id="v1" x2="0" y2="1"><stop stop-color="#87f07a"/><stop offset="1" stop-color="#58bb40"/></linearGradient><linearGradient id="v2" x2="0" y2="1"><stop stop-color="#f4f8f4"/><stop offset=".25" stop-color="#fff"/><stop offset=".6" stop-color="#d4dad4"/><stop offset="1" stop-color="#a4da9a"/></linearGradient></defs><rect width="308" height="308" rx="70" fill="url(#v1)"/><rect x="46" y="87" width="150" height="137" rx="32" fill="url(#v2)"/><path d="M204 140q0-8 6-14l36-28q6-4 11-2 4 2 4 8v104q0 6-4 8-5 2-11-2l-36-28q-6-6-6-14z" fill="url(#v2)"/></svg></div>
    <div class="relative"><svg class="size-[102.750px] drop-shadow" viewBox="0 0 308 308"><g clip-path="url(#sq)"><path d="M0 0h308v308H0z" fill="#f8f7f5"/><path d="M0 0h308v95H0z" fill="#e2604f"/></g><text x="95" y="73" font-family="Inter" font-weight="600" font-size="60" textLength="116" lengthAdjust="spacingAndGlyphs" fill="#fbf3f2">SEP</text><text x="42" y="262" font-family="Inter" font-weight="300" font-size="192" textLength="226" lengthAdjust="spacingAndGlyphs" fill="#29292b">23</text></svg>
      <div class="absolute -right-[19px] -top-[16px] flex size-12 items-center justify-center rounded-full bg-[#e34c3d] text-[25px] leading-none text-white shadow">2</div></div>
    <div class="relative"><svg class="size-[102.750px] overflow-visible drop-shadow" viewBox="0 0 308 308"><defs><linearGradient id="x1" x2="0" y2="1"><stop stop-color="#54b4ee"/><stop offset=".5" stop-color="#468ee8"/><stop offset="1" stop-color="#2c57d4"/></linearGradient><linearGradient id="x2" x2="1"><stop stop-color="#202226"/><stop offset=".5" stop-color="#44474d"/><stop offset="1" stop-color="#1e2023"/></linearGradient></defs><rect width="308" height="308" rx="70" fill="url(#x1)"/><rect x="18" y="18" width="273" height="274" rx="50" fill="none" stroke="#eaf4ff" stroke-width="3.500"/><g fill="none" stroke="#a9d0fa" stroke-width="2" opacity=".7"><circle cx="154" cy="154" r="127"/><circle cx="154" cy="154" r="100"/></g><g stroke-linecap="round"><path d="M137 71l96 164" stroke="#fff" stroke-width="30"/><path d="M137 71l96 164" stroke="#4690e8" stroke-width="24"/><path d="M58 192h192" stroke="#fff" stroke-width="30"/><path d="M58 192h192" stroke="#4087e6" stroke-width="24"/><path d="M171 71L77 235" stroke="#fff" stroke-width="30"/><path d="M171 71L77 235" stroke="#5aa0ec" stroke-width="24"/></g><path d="M217 136Q250 72 254 40" fill="none" stroke="#5f6268" stroke-width="27"/><path d="M202 126L95 296q-4 14 8 22 20 14 34 6l4-4 86-180z" fill="url(#x2)" stroke="#17181b" stroke-width="2"/><path d="M172-17q50-16 92-2 38 10 48 40l12 4q3-5 21-1l-7 44-14-2-6-14-20-10q-26 2-30 12l-33-5q-4-44-63-66z" fill="#3b3e43"/><path d="M172-17q50-16 92-2 20 6 30 14-60-8-122-12z" fill="#63666b"/><path d="M326 24l18-1-7 44-14-4z" fill="#8d9095"/></svg></div>
    <div class="relative"><svg class="size-[102.750px] drop-shadow" viewBox="0 0 308 308"><defs><linearGradient id="a1" x2="0" y2="1"><stop stop-color="#5ab8f0"/><stop offset=".5" stop-color="#4490e8"/><stop offset="1" stop-color="#2857d2"/></linearGradient></defs><rect width="308" height="308" rx="70" fill="url(#a1)"/><g stroke="#f5f9fe" stroke-width="26" stroke-linecap="round" fill="none"><path d="M58 191h115M240 191h10M137 71l8 13M171 71l-62 108M77 236l8-13M178 138l55 98"/></g><path d="M173 178q13 3 13 26h26l-22-38z" fill="#3b80e3"/><path d="M173 178h10l3 26h-13z" fill="#f5f9fe"/><path d="M166 118q4-6 7-8l72 118-24 14-48-84q-8-22-7-40z" fill="#f5f9fe"/><path d="M66 216q22-7 33 5" stroke="#3a7de0" stroke-width="7" fill="none"/></svg></div>
    <div class="relative"><svg class="size-[102.750px] drop-shadow" viewBox="0 0 308 308"><defs><linearGradient id="g1" x2="0" y2="1"><stop stop-color="#d9e2ea"/><stop offset=".5" stop-color="#b5b9bb"/><stop offset="1" stop-color="#8c8984"/></linearGradient></defs><rect width="308" height="308" rx="70" fill="url(#g1)"/><circle cx="154" cy="154" r="133" fill="#1f2223" stroke="#c9cdd0" stroke-width="3"/><circle cx="154" cy="154" r="112" fill="none" stroke="#aab1b4" stroke-width="18" pathLength="144" stroke-dasharray="1.100 .9"/><circle cx="154" cy="154" r="92" fill="#3c3f3f"/><circle cx="154" cy="154" r="73" fill="none" stroke="#8d9293" stroke-width="10" pathLength="120" stroke-dasharray="1.100 .9"/><circle cx="154" cy="154" r="62" fill="#626563" stroke="#858a8b" stroke-width="10"/><circle cx="154" cy="154" r="54" fill="#5a5c5a" stroke="#2c2f30" stroke-width="6"/><circle cx="154" cy="154" r="97" fill="none" stroke="#b4babc" stroke-width="12"/><path d="M154 154h94M154 154l-47-82M154 154l-47 82" stroke="#b4babc" stroke-width="10"/><path d="M226 147q16-2 16-14l8 3v36l-8 3q0-12-16-14zM112 93q-7-14-18-9l-2-8 26-14 6 5q-9 9-3 20zM112 215q-7 14-18 9l-2 8 26 14 6-5q-9-9-3-20z" fill="#b4babc"/><circle cx="154" cy="154" r="9" fill="#9ea3a4"/><circle cx="154" cy="154" r="4.500" fill="#333"/></svg>
      <div class="absolute -right-[19px] -top-[16px] flex size-12 items-center justify-center rounded-full bg-[#e34c3d] text-[25px] leading-none text-white shadow">2</div></div>
    <div class="relative"><svg class="-m-[1px] size-[104.750px]" viewBox="0 0 315 315"><defs><linearGradient id="o1" x2="0" y2="1"><stop offset=".3" stop-color="#ea3d3a"/><stop offset="1" stop-color="#961f1d"/></linearGradient><linearGradient id="o2" x2="0" y2="1"><stop stop-color="#8c1b12"/><stop offset=".75" stop-color="#ee5e55"/></linearGradient></defs><rect width="315" height="315" rx="74" fill="#fff"/><circle cx="157" cy="158" r="136" fill="url(#o1)"/><path d="M118 76Q150 41 190 41q25 0 50 13a136 136 0 0 1 0 208q-25 14-50 14-40 0-72-38z" fill="url(#o2)"/><ellipse cx="158" cy="158" rx="72" ry="101" fill="#fff"/></svg><i class="absolute -right-[29px] top-[47px] size-2 rounded-full bg-[#9a92c8]"></i></div>
    <div class="relative"><svg class="size-[102.750px] drop-shadow" viewBox="0 0 308 308"><rect width="308" height="308" rx="70" fill="#fff"/><path d="M198 48h8v60L72 210q-8 6-14 0L45 196q-5-7 2-13z" fill="#2c64a8"/><path d="M58 100q6-4 12 0l136 104v60h-8L43 128q-3-6 1-12z" fill="#3878c8"/><path d="M198 48q4-2 10 0l47 23q6 4 6 10v145q0 7-6 10l-49 27q-4 2-8 0 8 0 8-10V56q0-6-8-8z" fill="#4b98ec"/></svg><i class="absolute -right-[29px] top-[47px] size-2 rounded-full bg-[#9a92c8]"></i></div>
  </div>
</main>

<!-- annotation arrow -->
<svg class="pointer-events-none absolute left-[1620px] top-[60px] z-10 h-[820px] w-[1580px]" viewBox="1620 60 1580 820" fill="#ec5327"><path d="M1641 859L3160 87" stroke="#ec5327" stroke-width="5"/><path d="M3178 78.500h-28l12 22z"/></svg>
</body>
</html>
